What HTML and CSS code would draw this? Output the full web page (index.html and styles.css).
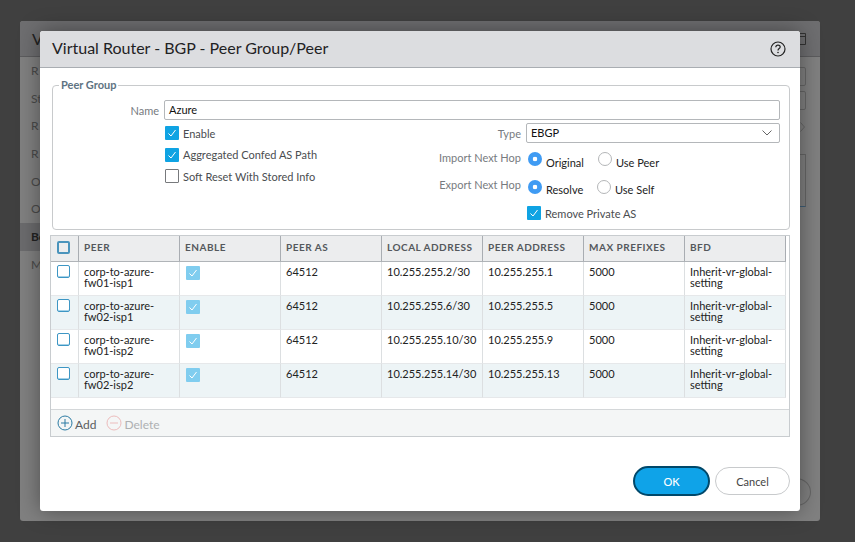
FILE: index.html
```html
<!DOCTYPE html>
<html>
<head>
  <title>Virtual Router - BGP - Peer Group/Peer</title>
  <meta name="viewport" content="width=device-width, initial-scale=1.0">
  <link rel="stylesheet" href="styles.css">
</head>
<body>
  <!-- dimmed window behind the dialog, only its edges show -->
  <div class="back-window">
    <div class="back-header">
      <span>V</span>
      <svg class="back-icon" width="6" height="12" viewBox="0 0 6 12"><path d="M-4 .5H5.5V11.5H-4M-4 3.5H5.5" fill="none" stroke="#333"/></svg>
    </div>
    <div class="back-body">
      <ul class="back-nav">
        <li>R</li>
        <li>St</li>
        <li>R</li>
        <li>R</li>
        <li>O</li>
        <li>O</li>
        <li class="back-selected">Bo</li>
        <li>M</li>
      </ul>
      <div class="back-main">
        <div class="back-field"></div>
        <div class="back-field"></div>
        <svg class="back-chevron" width="5" height="10" viewBox="0 0 5 10"><path d="M.5 .5L4.5 5L.5 9.5" fill="none" stroke="#666"/></svg>
        <div class="back-panel"></div>
      </div>
    </div>
    <div class="back-footer"><span class="back-cancel"></span></div>
  </div>

  <div class="modal">
    <div class="modal-header">
      <h1>Virtual Router - BGP - Peer Group/Peer</h1>
      <svg class="help-icon" width="16" height="16" viewBox="0 0 16 16">
        <circle cx="8" cy="8" r="7" fill="none" stroke="#222" stroke-width="1.2"/>
        <path d="M5.8 6.2C5.9 4.9 6.8 4.2 8 4.2C9.3 4.2 10.2 5 10.2 6.1C10.2 7.6 8 7.6 8 9.4" fill="none" stroke="#222" stroke-width="1.2"/>
        <circle cx="8" cy="11.5" r=".8" fill="#222"/>
      </svg>
    </div>

    <div class="modal-body">
      <fieldset class="group">
        <legend>Peer Group</legend>
        <div class="name-row">
          <label class="field-label name-label">Name</label>
          <div class="text-input">Azure</div>
        </div>
        <div class="group-cols">
          <div class="col-left">
            <div class="check-row"><span class="check on"><svg width="14" height="14" viewBox="0 0 14 14"><path d="M3.5 7.5L6 10L10.5 4" fill="none" stroke="#fff"/></svg></span>Enable</div>
            <div class="check-row"><span class="check on"><svg width="14" height="14" viewBox="0 0 14 14"><path d="M3.5 7.5L6 10L10.5 4" fill="none" stroke="#fff"/></svg></span>Aggregated Confed AS Path</div>
            <div class="check-row"><span class="check"></span>Soft Reset With Stored Info</div>
          </div>
          <div class="col-right">
            <div class="type-row">
              <label class="field-label side-label">Type</label>
              <div class="select-input">
                <span>EBGP</span>
                <svg width="10" height="6" viewBox="0 0 10 6"><path d="M.5 .5L5 5L9.5 .5" fill="none" stroke="#666"/></svg>
              </div>
            </div>
            <div class="radio-row import-row">
              <label class="field-label side-label">Import Next Hop</label>
              <span class="radio on"></span><span class="radio-text first">Original</span>
              <span class="radio"></span><span class="radio-text">Use Peer</span>
            </div>
            <div class="radio-row export-row">
              <label class="field-label side-label">Export Next Hop</label>
              <span class="radio on"></span><span class="radio-text first resolve">Resolve</span>
              <span class="radio"></span><span class="radio-text">Use Self</span>
            </div>
            <div class="check-row remove-row"><span class="check on"><svg width="14" height="14" viewBox="0 0 14 14"><path d="M3.5 7.5L6 10L10.5 4" fill="none" stroke="#fff"/></svg></span>Remove Private AS</div>
          </div>
        </div>
      </fieldset>

      <div class="grid-box">
        <div class="grid-scroll">
          <table class="peers">
            <thead>
              <tr>
                <th class="sel-col"><span class="row-check head-check"></span></th>
                <th>Peer</th>
                <th>Enable</th>
                <th>Peer AS</th>
                <th>Local Address</th>
                <th>Peer Address</th>
                <th>Max Prefixes</th>
                <th>BFD</th>
              </tr>
            </thead>
            <tbody id="peer-rows"></tbody>
          </table>
        </div>
        <div class="grid-footer">
          <span class="grid-btn">
            <svg width="16" height="16" viewBox="0 0 16 16"><circle cx="8" cy="8" r="7" fill="none" stroke="#2b7ba3"/><path d="M8 4V12M4 8H12" stroke="#2b7ba3"/></svg>
            Add
          </span>
          <span class="grid-btn disabled">
            <svg width="16" height="16" viewBox="0 0 16 16"><circle cx="8" cy="8" r="7" fill="none" stroke="#ecbcbc"/><path d="M4 8H12" stroke="#ecbcbc"/></svg>
            Delete
          </span>
        </div>
      </div>
    </div>

    <div class="modal-footer">
      <button class="btn btn-ok">OK</button>
      <button class="btn btn-cancel">Cancel</button>
    </div>
  </div>

  <script>
    const peers = [
      ['corp-to-azure-fw01-isp1', '10.255.255.2/30', '10.255.255.1'],
      ['corp-to-azure-fw02-isp1', '10.255.255.6/30', '10.255.255.5'],
      ['corp-to-azure-fw01-isp2', '10.255.255.10/30', '10.255.255.9'],
      ['corp-to-azure-fw02-isp2', '10.255.255.14/30', '10.255.255.13']
    ];

    const tableBody = document.getElementById('peer-rows');
    peers.forEach(peer => {
      const row = document.createElement('tr');
      row.innerHTML = `
        <td class="sel-col"><span class="row-check"></span></td>
        <td>${peer[0].replace('azure-', 'azure-<br>')}</td>
        <td><span class="check on faded"><svg width="14" height="14" viewBox="0 0 14 14"><path d="M3.5 7.5L6 10L10.5 4" fill="none" stroke="#fff"/></svg></span></td>
        <td>64512</td>
        <td>${peer[1]}</td>
        <td>${peer[2]}</td>
        <td>5000</td>
        <td>Inherit-vr-global-<br>setting</td>
      `;
      tableBody.appendChild(row);
    });
  </script>
</body>
</html>
```

FILE: styles.css
```css
html, body {
  height: 100%;
}
body {
  margin: 0;
  overflow: hidden;
  background-color: #404040;
  font-family: Lato, "Open Sans", sans-serif;
  font-size: 11px;
  color: #222;
}

/* window behind the dialog, already dimmed */
.back-window {
  position: absolute;
  left: 20px;
  top: 21px;
  width: 800px;
  height: 500px;
  display: flex;
  flex-direction: column;
  background-color: #808080;
  border-radius: 3px;
  overflow: hidden;
}
.back-header {
  height: 36px;
  flex: none;
  display: flex;
  align-items: center;
  justify-content: space-between;
  padding: 0 14px 0 12px;
  box-sizing: border-box;
  background-color: #6e6e70;
  border-bottom: 1px solid #5c5c5e;
  font-size: 16px;
  color: #222;
}
.back-body {
  flex: 1;
  display: flex;
}
.back-nav {
  list-style: none;
  margin: 0;
  padding: 0;
  width: 120px;
  font-size: 12px;
  color: #4a4a4a;
}
.back-nav li {
  height: 27.7px;
  line-height: 27.7px;
  padding-left: 11px;
}
.back-nav .back-selected {
  background-color: #6b6b6d;
  font-weight: bold;
  color: #222;
}
.back-main {
  flex: 1;
  display: flex;
  flex-direction: column;
  align-items: flex-end;
  padding: 10px 14px 0 0;
}
.back-field {
  width: 100%;
  height: 19px;
  box-sizing: border-box;
  margin-bottom: 5px;
  border: 1px solid #666;
  border-radius: 2px;
}
.back-chevron {
  margin: 7px 1px 0 0;
}
.back-panel {
  width: 100%;
  height: 53px;
  box-sizing: border-box;
  margin-top: 22px;
  border: 1px solid #666;
  border-bottom: 1px solid #3f5f78;
}
.back-footer {
  height: 60px;
  flex: none;
  display: flex;
  justify-content: flex-end;
  padding-right: 9px;
}
.back-cancel {
  width: 28px;
  height: 26px;
  margin-top: 17px;
  border: 1px solid #666;
  border-radius: 50%;
}

/* dialog */
.modal {
  position: absolute;
  left: 40px;
  top: 31px;
  width: 760px;
  height: 480px;
  display: flex;
  flex-direction: column;
  background-color: white;
  border-radius: 3px;
  box-shadow: 0 0 22px rgba(0, 0, 0, 0.4);
}
.modal-header {
  height: 37px;
  flex: none;
  box-sizing: border-box;
  display: flex;
  align-items: center;
  justify-content: space-between;
  padding: 0 14px 3px 12px;
  background-color: #dcdde0;
  border-bottom: 1px solid #a9adb2;
  border-radius: 3px 3px 0 0;
}
.modal-header h1 {
  margin: 0;
  font-size: 16px;
  font-weight: normal;
  color: #1f2224;
}
.help-icon {
  margin-top: 3px;
}
.modal-body {
  flex: 1;
  padding: 0 10px;
}

.group {
  margin: 11px 0 0 2px;
  padding: 0;
  min-width: 0;
  width: 738px;
  height: 151px;
  box-sizing: border-box;
  border: 1px solid #c8cacc;
  border-radius: 4px;
}
.group legend {
  margin-left: 6px;
  padding: 0 2px;
  font-size: 11px;
  font-weight: bold;
  color: #5e7382;
  line-height: 12px;
}
.name-row {
  display: flex;
  align-items: center;
  margin-top: 9px;
}
.field-label {
  color: #777b80;
  text-align: right;
  font-size: 11px;
}
.name-label {
  width: 106px;
  margin-right: 5px;
}
.text-input {
  width: 616px;
  height: 20px;
  box-sizing: border-box;
  padding-left: 4px;
  line-height: 17px;
  border: 1px solid #b4b7ba;
  border-radius: 2px;
  color: #111;
}
.group-cols {
  display: flex;
}
.col-left {
  width: 374px;
  flex: none;
  padding: 6px 0 0 112px;
  box-sizing: border-box;
}
.col-right {
  flex: 1;
  padding-top: 3px;
}
.check-row {
  display: flex;
  align-items: center;
  gap: 4px;
  height: 14px;
  margin-bottom: 7.5px;
  color: #4a4d50;
}
.check {
  width: 14px;
  height: 14px;
  flex: none;
  box-sizing: border-box;
  border: 1px solid #77797c;
  border-radius: 1px;
}
.check.on {
  background-color: #0fa3e3;
  border: none;
}
.check svg {
  display: block;
}
.check.faded {
  display: block;
  background-color: #80cdef;
  margin: 0 0 0 1px;
}
.type-row {
  display: flex;
  align-items: center;
  height: 20px;
}
.side-label {
  width: 94px;
  flex: none;
  margin-right: 5px;
}
.select-input {
  width: 254px;
  height: 20px;
  box-sizing: border-box;
  display: flex;
  align-items: center;
  justify-content: space-between;
  padding: 0 7px 1px 4px;
  border: 1px solid #b4b7ba;
  border-radius: 2px;
  color: #111;
}
.radio-row {
  display: flex;
  align-items: center;
  height: 14px;
  color: #222;
}
.import-row {
  margin-top: 9px;
}
.import-row .side-label {
  margin-top: -4px;
}
.import-row .radio-text {
  margin-top: 6px;
}
.export-row {
  margin-top: 14px;
}
.export-row .side-label {
  margin-top: -6px;
}
.export-row .radio-text {
  margin-top: 4px;
}
.radio {
  width: 14px;
  height: 14px;
  flex: none;
  box-sizing: border-box;
  margin-left: 2px;
  border: 1px solid #b4b6b8;
  border-radius: 50%;
  background-color: white;
}
.radio.on {
  background-color: #3f9bf3;
  border: none;
  background-image: radial-gradient(circle, white 0, white 2px, transparent 2.6px);
}
.radio-text {
  margin-left: 4px;
  font-size: 11px;
}
.radio-text.first {
  width: 50px;
}
.radio-text.resolve {
  width: 49px;
}
.remove-row {
  margin: 12px 0 0 100px;
}

/* peer grid */
.grid-box {
  margin-top: 5px;
  width: 740px;
  height: 202px;
  box-sizing: border-box;
  display: flex;
  flex-direction: column;
  border: 1px solid #c8cccf;
}
.grid-scroll {
  flex: 1;
}
.peers {
  width: 735px;
  table-layout: fixed;
  border-collapse: separate;
  border-spacing: 0;
}
.peers th, .peers td {
  width: 101px;
  box-sizing: border-box;
  padding: 0 5px;
  text-align: left;
}
.peers th:first-child, .peers td:first-child {
  width: 28px;
}
.peers th {
  height: 26px;
  padding-bottom: 3px;
  background-color: #ecedee;
  border-right: 1px solid #a9adb2;
  border-bottom: 1px solid #b0b4b8;
  font-size: 10px;
  font-weight: bold;
  letter-spacing: 0.5px;
  text-transform: uppercase;
  color: #54585c;
}
.peers td {
  height: 34px;
  vertical-align: top;
  padding-top: 4px;
  line-height: 11px;
  border-right: 1px solid #dcdfe1;
  border-bottom: 1px solid #e6e8ea;
  color: #222;
}
.peers tr:nth-child(even) td {
  background-color: #edf4f6;
}
.peers td.sel-col {
  padding: 0;
}
.peers th.sel-col {
  padding: 0 0 3px;
}
.row-check {
  display: block;
  width: 13px;
  height: 13px;
  box-sizing: border-box;
  margin: 3px 0 0 6px;
  border: 1px solid #3d96c4;
  border-radius: 2px;
  background-color: white;
  box-shadow: inset 0 -1px 0 #a6d2e8;
}
.row-check.head-check {
  margin-top: 0;
  border-width: 2px;
  border-color: #4a94bc;
  background-color: transparent;
  box-shadow: none;
}
.grid-footer {
  height: 27px;
  flex: none;
  box-sizing: border-box;
  display: flex;
  align-items: center;
  gap: 10px;
  padding-left: 6px;
  background-color: #f4f6f6;
  border-top: 1px solid #d4d7d9;
}
.grid-btn {
  display: flex;
  align-items: center;
  gap: 2px;
  padding-top: 2px;
  font-size: 12px;
  color: #5a5d60;
}
.grid-btn svg {
  margin-bottom: 2px;
}
.grid-btn.disabled {
  color: #aeb0b2;
}

.modal-footer {
  display: flex;
  justify-content: flex-end;
  gap: 5px;
  padding: 0 10px 15px 0;
  align-items: center;
}
.btn {
  font-family: Lato, "Open Sans", sans-serif;
  font-size: 11px;
  border-radius: 15px;
  padding: 0;
}
.btn-ok {
  width: 77px;
  height: 30px;
  background-color: #0fa3e8;
  border: 2px solid #00486a;
  font-weight: 500;
  color: white;
}
.btn-cancel {
  width: 75px;
  height: 28px;
  background-color: white;
  border: 1px solid #c8cacc;
  color: #444;
}
```
